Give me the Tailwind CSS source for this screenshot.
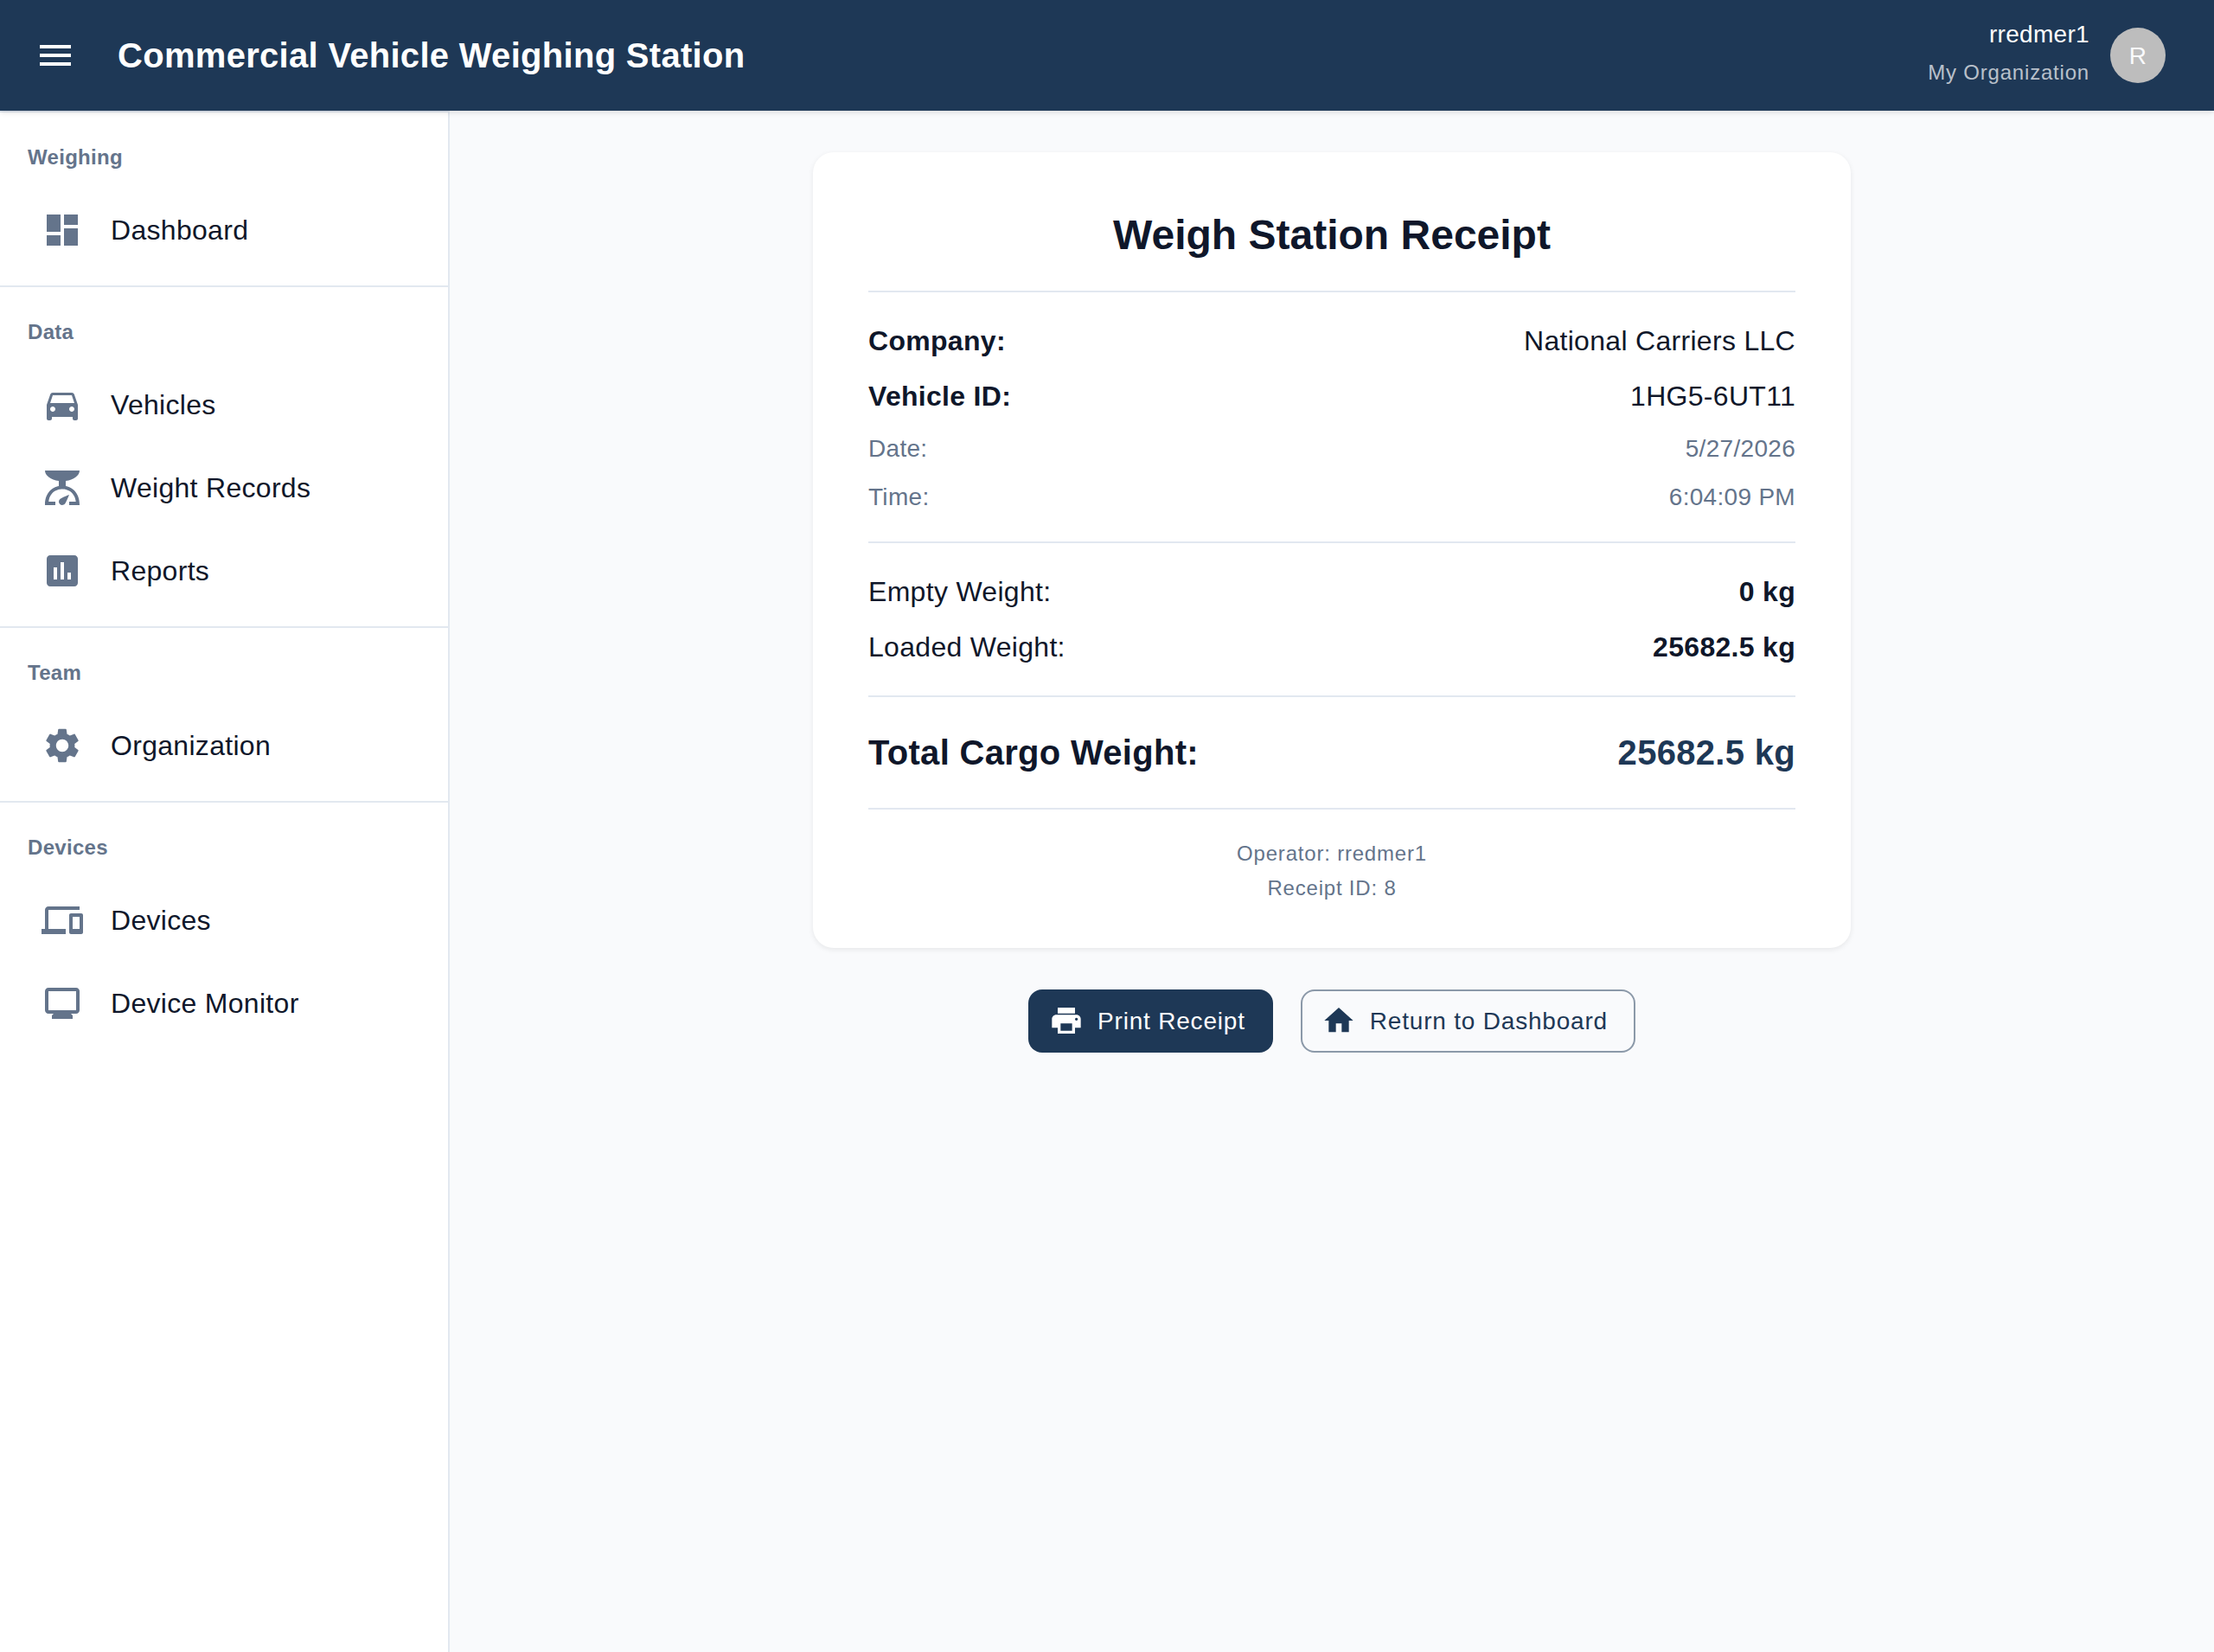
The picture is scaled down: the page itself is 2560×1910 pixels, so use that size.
<!DOCTYPE html>
<html lang="en">
<head>
  <meta charset="UTF-8" />
  <meta name="viewport" content="width=device-width, initial-scale=1.0" />
  <title>Commercial Vehicle Weighing Station</title>
  <script src="https://cdn.jsdelivr.net/npm/@tailwindcss/browser@4"></script>
</head>
<body class="bg-[#f9fafc] text-[#0f172a] font-['Liberation_Sans',Arial,sans-serif] text-[32px] leading-12 tracking-[0.3px] h-[1910px] flex flex-col overflow-hidden">

  <!-- Top bar -->
  <header class="relative z-10 h-32 shrink-0 bg-[#1e3856] text-white flex items-center pl-10 pr-14 shadow-[0_2px_6px_rgba(0,0,0,0.12)]">
    <svg class="size-12" viewBox="0 0 24 24" fill="currentColor"><path d="M3 18h18v-2H3zm0-5h18v-2H3zm0-7v2h18V6z"/></svg>
    <h1 class="ml-12 text-[40px] font-bold leading-16">Commercial Vehicle Weighing Station</h1>
    <div class="ml-auto text-right">
      <p class="text-[28px] leading-10">rredmer1</p>
      <p class="text-2xl leading-12 tracking-[0.8px] text-white/70">My Organization</p>
    </div>
    <div class="ml-6 size-16 pt-0.5 rounded-full bg-[#bdbdbd] text-[#f9fafc] text-[28px] flex items-center justify-center">R</div>
  </header>

  <div class="flex flex-1">
    <!-- Sidebar -->
    <nav class="w-[520px] shrink-0 bg-white border-r-2 border-slate-200">
      <section class="border-t-2 border-slate-200 py-4">
        <h2 class="px-8 text-2xl leading-18 font-bold text-[#64748b]">Weighing</h2>
        <a class="flex items-center h-24 px-12 gap-8">
          <svg class="size-12 text-[#64748b]" viewBox="0 0 24 24" fill="currentColor"><path d="M3 13h8V3H3zm0 8h8v-6H3zm10 0h8V11h-8zm0-18v6h8V3z"/></svg>
          Dashboard
        </a>
      </section>
      <section class="border-t-2 border-slate-200 py-4">
        <h2 class="px-8 text-2xl leading-18 font-bold text-[#64748b]">Data</h2>
        <a class="flex items-center h-24 px-12 gap-8">
          <svg class="size-12 text-[#64748b]" viewBox="0 0 24 24" fill="currentColor"><path d="M18.92 6.01C18.72 5.42 18.16 5 17.5 5h-11c-.66 0-1.21.42-1.42 1.01L3 12v8c0 .55.45 1 1 1h1c.55 0 1-.45 1-1v-1h12v1c0 .55.45 1 1 1h1c.55 0 1-.45 1-1v-8zM6.5 16c-.83 0-1.5-.67-1.5-1.5S5.67 13 6.5 13s1.5.67 1.5 1.5S7.33 16 6.5 16m11 0c-.83 0-1.5-.67-1.5-1.5s.67-1.5 1.5-1.5 1.5.67 1.5 1.5-.67 1.5-1.5 1.5M5 11l1.5-4.5h11L19 11z"/></svg>
          Vehicles
        </a>
        <a class="flex items-center h-24 px-12 gap-8">
          <svg class="size-12 text-[#64748b]" viewBox="0 0 24 24" fill="currentColor"><path d="M14 11V8c4.56-.58 8-3.1 8-6H2c0 2.9 3.44 5.42 8 6v3c-3.68.73-8 3.61-8 11h6v-2H4.13c.93-6.83 6.65-7.2 7.87-7.2s6.94.37 7.87 7.2H16v2h6c0-7.39-4.32-10.27-8-11"/><path d="M12 22c-1.1 0-2-.9-2-2 0-.55.22-1.05.59-1.41C11.39 17.79 16 16 16 16s-1.79 4.61-2.59 5.41c-.36.37-.86.59-1.41.59"/></svg>
          Weight Records
        </a>
        <a class="flex items-center h-24 px-12 gap-8">
          <svg class="size-12 text-[#64748b]" viewBox="0 0 24 24" fill="currentColor"><path d="M19 3H5c-1.1 0-2 .9-2 2v14c0 1.1.9 2 2 2h14c1.1 0 2-.9 2-2V5c0-1.1-.9-2-2-2M9 17H7v-7h2zm4 0h-2V7h2zm4 0h-2v-4h2z"/></svg>
          Reports
        </a>
      </section>
      <section class="border-t-2 border-slate-200 py-4">
        <h2 class="px-8 text-2xl leading-18 font-bold text-[#64748b]">Team</h2>
        <a class="flex items-center h-24 px-12 gap-8">
          <svg class="size-12 text-[#64748b]" viewBox="0 0 24 24" fill="currentColor"><path d="M19.14 12.94c.04-.3.06-.61.06-.94 0-.32-.02-.64-.07-.94l2.03-1.58c.18-.14.23-.41.12-.61l-1.92-3.32c-.12-.22-.37-.29-.59-.22l-2.39.96c-.5-.38-1.03-.7-1.62-.94l-.36-2.54c-.04-.24-.24-.41-.48-.41h-3.84c-.24 0-.43.17-.47.41l-.36 2.54c-.59.24-1.13.57-1.62.94l-2.39-.96c-.22-.08-.47 0-.59.22L2.74 8.87c-.12.21-.08.47.12.61l2.03 1.58c-.05.3-.09.63-.09.94s.02.64.07.94l-2.03 1.58c-.18.14-.23.41-.12.61l1.92 3.32c.12.22.37.29.59.22l2.39-.96c.5.38 1.03.7 1.62.94l.36 2.54c.05.24.24.41.48.41h3.84c.24 0 .44-.17.47-.41l.36-2.54c.59-.24 1.13-.56 1.62-.94l2.39.96c.22.08.47 0 .59-.22l1.92-3.32c.12-.22.07-.47-.12-.61zM12 15.6c-1.98 0-3.6-1.62-3.6-3.6s1.62-3.6 3.6-3.6 3.6 1.62 3.6 3.6-1.62 3.6-3.6 3.6"/></svg>
          Organization
        </a>
      </section>
      <section class="border-t-2 border-slate-200 py-4">
        <h2 class="px-8 text-2xl leading-18 font-bold text-[#64748b]">Devices</h2>
        <a class="flex items-center h-24 px-12 gap-8">
          <svg class="size-12 text-[#64748b]" viewBox="0 0 24 24" fill="currentColor"><path d="M4 6h18V4H4c-1.1 0-2 .9-2 2v11H0v3h14v-3H4zm19 2h-6c-.55 0-1 .45-1 1v10c0 .55.45 1 1 1h6c.55 0 1-.45 1-1V9c0-.55-.45-1-1-1m-1 9h-4v-7h4z"/></svg>
          Devices
        </a>
        <a class="flex items-center h-24 px-12 gap-8">
          <svg class="size-12 text-[#64748b]" viewBox="0 0 24 24" fill="currentColor"><path d="M20 3H4c-1.1 0-2 .9-2 2v11c0 1.1.9 2 2 2h3l-1 1v2h12v-2l-1-1h3c1.1 0 2-.9 2-2V5c0-1.1-.9-2-2-2m0 13H4V5h16z"/></svg>
          Device Monitor
        </a>
      </section>
    </nav>

    <!-- Receipt -->
    <main class="flex-1 pt-12">
      <div class="w-[1200px] mx-auto bg-white rounded-3xl px-16 pt-16 pb-[49px] shadow-[0_2px_6px_rgba(0,0,0,0.08)]">
        <h2 class="text-5xl leading-16 tracking-normal font-bold text-center">Weigh Station Receipt</h2>
        <hr class="my-8 border-t-2 border-slate-200" />
        <div class="flex justify-between mb-4"><span class="font-bold">Company:</span><span>National Carriers LLC</span></div>
        <div class="flex justify-between mb-[17px]"><span class="font-bold">Vehicle ID:</span><span>1HG5-6UT11</span></div>
        <div class="flex justify-between mb-4 text-[28px] leading-10 text-[#64748b]"><span>Date:</span><span>5/27/2026</span></div>
        <div class="flex justify-between text-[28px] leading-10 text-[#64748b]"><span>Time:</span><span>6:04:09 PM</span></div>
        <hr class="mt-[31px] mb-8 border-t-2 border-slate-200" />
        <div class="flex justify-between mb-4"><span>Empty Weight:</span><span class="font-bold">0 kg</span></div>
        <div class="flex justify-between"><span>Loaded Weight:</span><span class="font-bold">25682.5 kg</span></div>
        <hr class="my-8 border-t-2 border-slate-200" />
        <div class="flex justify-between text-[40px] leading-16 font-bold"><span>Total Cargo Weight:</span><span class="text-[#1e3856]">25682.5 kg</span></div>
        <hr class="mt-8 mb-[31px] border-t-2 border-slate-200" />
        <div class="text-center text-2xl leading-10 tracking-[0.8px] text-[#64748b]">
          <p>Operator: rredmer1</p>
          <p>Receipt ID: 8</p>
        </div>
      </div>

      <div class="mt-12 flex justify-center gap-8 text-[28px] tracking-[0.8px]">
        <button class="flex items-center h-[73px] pl-6 pr-8 gap-4 rounded-2xl bg-[#1e3856] text-white">
          <svg class="size-10 -mt-px" viewBox="0 0 24 24" fill="currentColor"><path d="M19 8H5c-1.66 0-3 1.34-3 3v6h4v4h12v-4h4v-6c0-1.66-1.34-3-3-3m-3 11H8v-5h8zm3-7c-.55 0-1-.45-1-1s.45-1 1-1 1 .45 1 1-.45 1-1 1m-1-9H6v4h12z"/></svg>
          Print Receipt
        </button>
        <button class="flex items-center h-[73px] pl-[22px] pr-[30px] gap-4 rounded-2xl border-2 border-[#1e3856]/50 text-[#1e3856]">
          <svg class="size-10 -mt-px" viewBox="0 0 24 24" fill="currentColor"><path d="M10 20v-6h4v6h5v-8h3L12 3 2 12h3v8z"/></svg>
          Return to Dashboard
        </button>
      </div>
    </main>
  </div>
</body>
</html>
